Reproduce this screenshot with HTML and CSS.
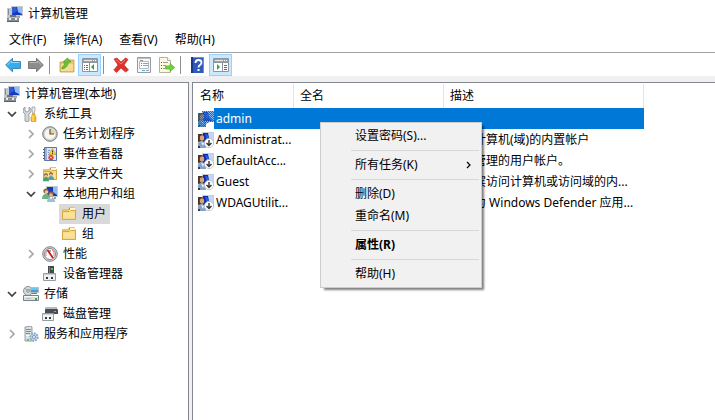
FILE: index.html
```html
<!DOCTYPE html>
<html lang="zh-CN">
<head>
<meta charset="UTF-8">
<meta name="viewport" content="width=device-width, initial-scale=1">
<title>计算机管理</title>
<link rel="stylesheet" href="styles.css">
</head>
<body>
<!-- icon set -->
<svg class="sprite" aria-hidden="true">
  <symbol id="i-computer" viewBox="0 0 16 16">
    <path d="M0 2h4v9H0z" fill="#c3c8cd"/><path d="M1 3h1v6H1z" fill="#848c93"/>
    <path d="M4 0h12v10H4z" fill="#c3cad1"/><path d="M5 1h10v8H5z" fill="#1738b8"/>
    <path d="M10 1h5v7l-4-2z" fill="#8fbcf4"/><path d="M5 1h4l1 4-5 3z" fill="#2c5de0"/>
    <path d="M8 10h5v2H8z" fill="#9aa1a8"/>
    <path d="M3 9h6v2H3z" fill="#6c7379"/><path d="M0 11h12v4H0z" fill="#858c92"/>
    <path d="M0 11h12v1H0z" fill="#b4babf"/><path d="M2 12h2v2H2zM8 12h2v2H8z" fill="#e8edf0"/>
    <path d="M0 15h12v1H0z" fill="#5b6167"/>
  </symbol>
  <symbol id="i-tools" viewBox="0 0 16 16">
    <path d="M2 1v4l2 1 2-1V1l2 2v3L6 8v7l-2 1-2-1V8L0 6V3z" fill="#d3d8db" stroke="#868d93" stroke-width=".8"/>
    <path d="M9 1h3v3l-1 4h-1L9 4z" fill="#eceff1" stroke="#8b9196" stroke-width=".7"/>
    <path d="M9 8h3v2l1 1v4l-1 1H9l-1-1v-4l1-1z" fill="#f7bd27" stroke="#cc8a14" stroke-width=".6"/>
    <path d="M10 9v6" stroke="#ffe28a"/>
  </symbol>
  <symbol id="i-clock" viewBox="0 0 16 16">
    <circle cx="8" cy="8" r="7.3" fill="#bcc4cd" stroke="#78818b"/>
    <circle cx="8" cy="8" r="5.6" fill="#fbf6e6" stroke="#d5dbe0" stroke-width=".8"/>
    <path d="M8 8V3a5 5 0 0 1 4.9 5z" fill="#f2cd83"/>
    <path d="M8 3v5h4" fill="none" stroke="#4c5661" stroke-width="1.2"/>
  </symbol>
  <symbol id="i-event" viewBox="0 0 16 16">
    <path d="M2.500 1.500h12v13h-12z" fill="#9db1d2" stroke="#5a75a6"/>
    <path d="M5 2h9v12H5z" fill="#dbe5f5"/><path d="M6 4.500h2M6 6.500h1M6 8.500h1" stroke="#7c96c8"/>
    <path d="M1 3.500h2M1 6.500h2M1 9.500h2M1 12.500h2" stroke="#4a5870"/>
    <path d="M10.500 2.500l3.500 6H7z" fill="#ffd83b" stroke="#c79b14" stroke-width=".7"/>
    <path d="M10.500 4.500v2M10.500 7v1" stroke="#333"/>
    <circle cx="9" cy="11.500" r="2.600" fill="#d9342b"/><path d="M8 10.500l2 2m0-2l-2 2" stroke="#fff" stroke-width=".8"/>
  </symbol>
  <symbol id="i-folder" viewBox="0 0 16 16">
    <path d="M1 3h6l1-2h6v2h1v11H1z" fill="#e9c463"/>
    <path d="M9 2h5v3H8z" fill="#fff7d8"/><path d="M1.500 5.500h7l1-1h5v9h-13z" fill="#f9dc8b" stroke="#d7a843"/>
    <path d="M3 7h10v4H3z" fill="#fce6a8" opacity=".6"/>
    <path d="M8 2h1v2H8z" fill="#c99732"/>
  </symbol>
  <symbol id="i-share" viewBox="0 0 16 16">
    <use href="#i-folder"/>
    <path d="M1 15q0-4 3-4t3 4z" fill="#45a46b"/><path d="M6 14q0-4 3-4t3 4z" fill="#5a9ba8"/>
    <circle cx="4" cy="9" r="1.800" fill="#6b4426"/><circle cx="4" cy="9.800" r="1.200" fill="#f1c59b"/>
    <circle cx="9" cy="8" r="1.800" fill="#6b4426"/><circle cx="9" cy="8.800" r="1.200" fill="#eab98a"/>
    <path d="M1 15h6v1H1z" fill="#c6e8d3"/>
  </symbol>
  <symbol id="i-users" viewBox="0 0 16 16">
    <path d="M4 0h12v11H4z" fill="#c3cad1"/><path d="M5 1h10v9H5z" fill="#1738b8"/>
    <path d="M11 1h4v8l-4-3z" fill="#8fbcf4"/><path d="M12 11h2v2h-2z" fill="#9aa1a8"/>
    <path d="M0 13q0-5 4-5t5 5z" fill="#6cb285"/>
    <circle cx="4" cy="5" r="2.600" fill="#8a6238"/><circle cx="4.500" cy="6" r="1.800" fill="#f1c59b"/>
    <path d="M5 16q0-5 4-5t4 5z" fill="#9dbdd4"/><path d="M8 11h2l-1 3z" fill="#fff"/>
    <circle cx="9" cy="8" r="2.600" fill="#8a6238"/><circle cx="9" cy="9" r="1.800" fill="#eab98a"/>
  </symbol>
  <symbol id="i-perf" viewBox="0 0 16 16">
    <circle cx="8" cy="8" r="7.300" fill="#d4d8db" stroke="#7b8288"/>
    <circle cx="8" cy="8" r="5.500" fill="#fff" stroke="#697077" stroke-width=".8"/>
    <path d="M4 10V6l2-2M10 4l2 2v4" fill="none" stroke="#d98080" stroke-width="1"/>
    <path d="M5.500 4l5.500 8" stroke="#d01616" stroke-width="1.800"/><path d="M8 4v2" stroke="#555"/>
  </symbol>
  <symbol id="i-device" viewBox="0 0 16 16">
    <path d="M6 0h6v8H6z" fill="#43484d"/><path d="M7 1h1v6H7z" fill="#777e84"/><path d="M9 2h2v2H9z" fill="#52c152"/>
    <path d="M1.500 7.500h12v7h-12z" fill="#eef0f1" stroke="#959ca1"/><path d="M2 8h11v1H2z" fill="#cfd3d6"/>
    <path d="M4 11h2v2H4zM9 11h2v2H9z" fill="#34393d"/>
  </symbol>
  <symbol id="i-storage" viewBox="0 0 16 16">
    <circle cx="5" cy="5" r="4.500" fill="#d6dadd" stroke="#8a9197"/><circle cx="5" cy="5" r="1.300" fill="#fff" stroke="#888"/>
    <path d="M2 2l3 3 3-3" fill="none" stroke="#87b98c"/>
    <path d="M7.500 1.500h8v5h-8z" fill="#3aa0dd" stroke="#b5bcc2"/><path d="M8 2h7v2H8z" fill="#73c5f0"/><path d="M9 7h5v1H9z" fill="#777"/>
    <path d="M.5 9.500h15v5H.5z" fill="#dce0e3" stroke="#7a8187"/><path d="M1 10h14v1H1z" fill="#f8f9fa"/>
    <path d="M12 12h2v2h-2z" fill="#38ae3d"/><path d="M3 12.500h5" stroke="#b6bdc3"/>
  </symbol>
  <symbol id="i-disk" viewBox="0 0 16 16">
    <path d="M4 1h10l2 3v4H3V4z" fill="#484e53"/><path d="M4 1h10l1 2H3z" fill="#b5bbc0"/><path d="M12 5h2v1h-2z" fill="#54d75a"/>
    <path d="M.5 7.500h11v7H.5z" fill="#f1f3f4" stroke="#959ca1"/><path d="M1 8h10v1H1z" fill="#cfd3d6"/>
    <path d="M3 11h2v2H3zM7 11h2v2H7z" fill="#34393d"/>
  </symbol>
  <symbol id="i-services" viewBox="0 0 16 16">
    <path d="M2 1l6-1 1 1v14H2z" fill="#dbe0e3" stroke="#828a91" stroke-width=".8"/>
    <path d="M3 3.500h5M3 5.500h5M3 7.500h4" stroke="#838b92"/><path d="M3 9h4v1H3z" fill="#fff"/>
    <path d="M4 13h2v2H4z" fill="#67c640"/>
    <circle cx="11" cy="11" r="3.700" fill="#c6daee" stroke="#8aa8c6" stroke-width="2" stroke-dasharray="1.800 1"/>
    <circle cx="11" cy="11" r="1.500" fill="#fff" stroke="#7594b4"/>
  </symbol>
  <symbol id="i-user" viewBox="0 0 16 16">
    <path d="M4 0h12v12H4z" fill="#c9ced4"/><path d="M5 1h10v9H5z" fill="#1029a8"/>
    <path d="M10 1h5v9l-4-4z" fill="#c3d6f8"/><path d="M7 2h2l2 4-2 2z" fill="#2c5de0"/>
    <path d="M0 2h4l2 2v4l-2 2H0z" fill="#4b3526"/><ellipse cx="4" cy="6" rx="2.200" ry="2.800" fill="#d9a377"/>
    <path d="M0 15v-4q2-3 5-2l3 3v4H2z" fill="#84a2c6"/><path d="M3 10l3 1-1 3z" fill="#eef3fa"/><path d="M0 14h2v2H0z" fill="#353b43"/>
  </symbol>
  <symbol id="i-user-off" viewBox="0 0 16 16">
    <use href="#i-user"/>
    <circle cx="11" cy="11" r="4.600" fill="#fff" stroke="#b9bdc1" stroke-width=".8"/>
    <path d="M11 8v5M8.500 11l2.500 2.500 2.500-2.500" fill="none" stroke="#333" stroke-width="1.400"/>
  </symbol>
  <pattern id="dither" width="2" height="2" patternUnits="userSpaceOnUse">
    <path d="M0 0h1v1H0zM1 1h1v1H1z" fill="#0078d7"/>
  </pattern>
  <symbol id="i-user-sel" viewBox="0 0 16 16">
    <use href="#i-user"/>
    <path d="M0 2h4V0h12v11h-4l-4 2v3H0z" fill="#0078d7" opacity=".3"/>
    <path d="M0 2h4V0h12v11h-4l-4 2v3H0z" fill="url(#dither)"/>
    <path d="M8 13l4-2h4v5H8z" fill="#fff"/>
  </symbol>
  <symbol id="i-back" viewBox="0 0 16 16">
    <path d="M.7 8L7.500 1.200V4.500h8v7h-8v3.300z" fill="#36aee8" stroke="#3a86bd"/>
    <path d="M2.500 8l4-4v1.500h8" fill="none" stroke="#8ddafa"/>
  </symbol>
  <symbol id="i-forward" viewBox="0 0 16 16">
    <path d="M15.300 8L8.500 1.200V4.500h-8v7h8v3.300z" fill="#8c8c8c" stroke="#777"/>
    <path d="M13.500 8l-4-4v1.500h-8" fill="none" stroke="#b8b8b8"/>
  </symbol>
  <symbol id="i-up" viewBox="0 0 16 16">
    <path d="M1 5h6l2-2h6v12H1z" fill="#edc367" stroke="#c99d50" stroke-width=".8"/><path d="M2 7h12v7H2z" fill="#f8dc92"/>
    <path d="M3 10q3-1 3-5H4l4.500-4L12 5H9.500q-1 6-6.500 7z" fill="#63c832" stroke="#4a9e30" stroke-width=".7"/>
  </symbol>
  <symbol id="i-tree-pane" viewBox="0 0 16 16">
    <path d="M.5 1.500h15v13H.5z" fill="#fff" stroke="#8d969f"/><path d="M1 2h14v3H1z" fill="#98a1aa"/>
    <path d="M2 3.500h8" stroke="#e7ebee"/><path d="M11 3.500h1M13 3.500h1" stroke="#fff"/>
    <path d="M0 5.500h16M7.500 6v8" stroke="#8d969f"/><path d="M2 8.500h1M4 8.500h2M2 10.500h1M4 10.500h2M2 12.500h1M4 12.500h2" stroke="#3975b8"/>
    <path d="M12 7v6l-3-3z" fill="#33a533"/>
  </symbol>
  <symbol id="i-delete" viewBox="0 0 16 16">
    <path d="M1 2l3-1 4 4 4.500-4L15 2.500 11 8l4.500 5-3 2L8 11l-4.500 4.500L.8 13 5 8z" fill="#e2302d" stroke="#c63c38" stroke-width=".8"/>
    <path d="M3 2.500l5 4.500 4-4" fill="none" stroke="#f58176"/>
  </symbol>
  <symbol id="i-props" viewBox="0 0 16 16">
    <path d="M1.500 .5h13v15h-13z" fill="#f7f7f7" stroke="#959ca2"/><path d="M2 1.500h12" stroke="#b9c0c6"/>
    <path d="M3.500 4.500h9v7h-9z" fill="#fff" stroke="#b0b8c0"/><path d="M4 3.500h3" stroke="#8a959f"/>
    <path d="M5 6.500h1M5 8.500h1" stroke="#258ccc"/><path d="M7 6.500h5M7 8.500h5" stroke="#959ea7"/>
    <path d="M6 13.500h3" stroke="#4db0dc"/><path d="M10 13.500h3" stroke="#9ba4ac"/>
  </symbol>
  <symbol id="i-export" viewBox="0 0 16 16">
    <path d="M.5 .5h8l3 3v12H.5z" fill="#fdf8df" stroke="#b9b29a"/><path d="M8.500 .5v3h3" fill="#fff" stroke="#b9b29a"/>
    <path d="M2 5.500h1M2 8.500h1M2 11.500h1" stroke="#555"/><path d="M4 5.500h5M4 8.500h3M4 11.500h2" stroke="#9a97b8"/>
    <path d="M6.500 9H11V6.500l4.700 4-4.700 4V12H6.500z" fill="#6ed239" stroke="#5ab032" stroke-width=".7"/>
  </symbol>
  <symbol id="i-help" viewBox="0 0 16 16">
    <path d="M1 0h13v16H1z" fill="#3159b9"/><path d="M1 0h2v16H1z" fill="#1c3789"/><path d="M3 0h11v1H3zM13 0h1v16h-1z" fill="#6d90da"/>
    <path d="M5.500 6q0-3 3-3t3 2.500q0 1.500-1.500 2.500T8.500 10.500" fill="none" stroke="#fff" stroke-width="1.800"/>
    <path d="M7.500 12h2v2h-2z" fill="#fff"/>
  </symbol>
  <symbol id="i-action-pane" viewBox="0 0 16 16">
    <path d="M.5 1.500h15v13H.5z" fill="#fff" stroke="#8d969f"/><path d="M1 2h14v3H1z" fill="#98a1aa"/>
    <path d="M2 3.500h8" stroke="#e7ebee"/><path d="M11 3.500h1M13 3.500h1" stroke="#fff"/>
    <path d="M0 5.500h16M9.500 6v8" stroke="#8d969f"/><path d="M11 8.500h3M11 10.500h3M11 12.500h3" stroke="#3975b8"/>
    <path d="M4 7v6l3-3z" fill="#33a533"/>
  </symbol>
  <symbol id="i-right" viewBox="0 0 16 16">
    <path d="M6 4l4 4-4 4" fill="none" stroke="currentColor" stroke-width="1.700"/>
  </symbol>
  <symbol id="i-right-small" viewBox="0 0 16 16">
    <path d="M8 5l3 3-3 3" fill="none" stroke="currentColor" stroke-width="1.200"/>
  </symbol>
  <symbol id="i-down" viewBox="0 0 16 16">
    <path d="M4 6l4 4 4-4" fill="none" stroke="currentColor" stroke-width="1.700"/>
  </symbol>
</svg>

<header class="titlebar">
  <svg class="icon"><use href="#i-computer"/></svg>
  <h1>计算机管理</h1>
</header>

<nav class="menubar">
  <button>文件(F)</button>
  <button>操作(A)</button>
  <button>查看(V)</button>
  <button>帮助(H)</button>
</nav>

<div class="toolbar" role="toolbar">
  <button aria-label="后退"><svg class="icon"><use href="#i-back"/></svg></button>
  <button aria-label="前进"><svg class="icon"><use href="#i-forward"/></svg></button>
  <span class="divider"></span>
  <button aria-label="向上"><svg class="icon"><use href="#i-up"/></svg></button>
  <button class="pressed" aria-label="显示控制台树" aria-pressed="true"><svg class="icon"><use href="#i-tree-pane"/></svg></button>
  <span class="divider"></span>
  <button aria-label="删除"><svg class="icon"><use href="#i-delete"/></svg></button>
  <button aria-label="属性"><svg class="icon"><use href="#i-props"/></svg></button>
  <button aria-label="导出列表"><svg class="icon"><use href="#i-export"/></svg></button>
  <span class="divider"></span>
  <button aria-label="帮助"><svg class="icon"><use href="#i-help"/></svg></button>
  <button class="pressed" aria-label="显示操作窗格" aria-pressed="true"><svg class="icon"><use href="#i-action-pane"/></svg></button>
</div>

<main class="panes">
  <nav class="tree">
    <div class="row">
      <button class="node"><svg class="icon"><use href="#i-computer"/></svg>计算机管理(本地)</button>
    </div>
    <ul>
      <li>
        <div class="row">
          <button class="twisty open" aria-label="折叠"><svg class="icon"><use href="#i-down"/></svg></button>
          <button class="node"><svg class="icon"><use href="#i-tools"/></svg>系统工具</button>
        </div>
        <ul>
          <li class="row">
            <button class="twisty" aria-label="展开"><svg class="icon"><use href="#i-right"/></svg></button>
            <button class="node"><svg class="icon"><use href="#i-clock"/></svg>任务计划程序</button>
          </li>
          <li class="row">
            <button class="twisty" aria-label="展开"><svg class="icon"><use href="#i-right"/></svg></button>
            <button class="node"><svg class="icon"><use href="#i-event"/></svg>事件查看器</button>
          </li>
          <li class="row">
            <button class="twisty" aria-label="展开"><svg class="icon"><use href="#i-right"/></svg></button>
            <button class="node"><svg class="icon"><use href="#i-share"/></svg>共享文件夹</button>
          </li>
          <li>
            <div class="row">
              <button class="twisty open" aria-label="折叠"><svg class="icon"><use href="#i-down"/></svg></button>
              <button class="node"><svg class="icon"><use href="#i-users"/></svg>本地用户和组</button>
            </div>
            <ul>
              <li class="row leaf"><button class="node selected"><svg class="icon"><use href="#i-folder"/></svg>用户</button></li>
              <li class="row leaf"><button class="node"><svg class="icon"><use href="#i-folder"/></svg>组</button></li>
            </ul>
          </li>
          <li class="row">
            <button class="twisty" aria-label="展开"><svg class="icon"><use href="#i-right"/></svg></button>
            <button class="node"><svg class="icon"><use href="#i-perf"/></svg>性能</button>
          </li>
          <li class="row leaf"><button class="node"><svg class="icon"><use href="#i-device"/></svg>设备管理器</button></li>
        </ul>
      </li>
      <li>
        <div class="row">
          <button class="twisty open" aria-label="折叠"><svg class="icon"><use href="#i-down"/></svg></button>
          <button class="node"><svg class="icon"><use href="#i-storage"/></svg>存储</button>
        </div>
        <ul>
          <li class="row leaf"><button class="node"><svg class="icon"><use href="#i-disk"/></svg>磁盘管理</button></li>
        </ul>
      </li>
      <li class="row">
        <button class="twisty" aria-label="展开"><svg class="icon"><use href="#i-right"/></svg></button>
        <button class="node"><svg class="icon"><use href="#i-services"/></svg>服务和应用程序</button>
      </li>
    </ul>
  </nav>

  <section class="list">
    <table>
      <colgroup><col class="col-name"><col class="col-full"><col class="col-desc"></colgroup>
      <thead>
        <tr><th>名称</th><th>全名</th><th>描述</th></tr>
      </thead>
      <tbody>
        <tr class="selected">
          <td><span class="user"><svg class="icon"><use href="#i-user-sel"/></svg><span>admin</span></span></td><td></td><td></td>
        </tr>
        <tr>
          <td><span class="user"><svg class="icon"><use href="#i-user-off"/></svg><span>Administrat...</span></span></td><td></td><td>管理计算机(域)的内置帐户</td>
        </tr>
        <tr>
          <td><span class="user"><svg class="icon"><use href="#i-user-off"/></svg><span>DefaultAcc...</span></span></td><td></td><td>系统管理的用户帐户。</td>
        </tr>
        <tr>
          <td><span class="user"><svg class="icon"><use href="#i-user-off"/></svg><span>Guest</span></span></td><td></td><td>供来宾访问计算机或访问域的内...</td>
        </tr>
        <tr>
          <td><span class="user"><svg class="icon"><use href="#i-user-off"/></svg><span>WDAGUtilit...</span></span></td><td></td><td>系统为 Windows Defender 应用...</td>
        </tr>
      </tbody>
    </table>

    <div class="context-menu" role="menu">
      <button role="menuitem">设置密码(S)...</button>
      <hr>
      <button role="menuitem">所有任务(K)<svg class="icon"><use href="#i-right-small"/></svg></button>
      <hr>
      <button role="menuitem">删除(D)</button>
      <button role="menuitem">重命名(M)</button>
      <hr>
      <button role="menuitem" class="default">属性(R)</button>
      <hr>
      <button role="menuitem">帮助(H)</button>
    </div>
  </section>
</main>
</body>
</html>
```

FILE: styles.css
```css
* {
  box-sizing: border-box;
}
body {
  margin: 0;
  height: 100vh;
  display: flex;
  flex-direction: column;
  overflow: hidden;
  background-color: #fff;
  color: #000;
  font: 12px/20px "Noto Sans", "Noto Sans CJK SC", sans-serif;
}
button {
  margin: 0;
  padding: 0;
  border: none;
  background: none;
  color: inherit;
  font: inherit;
  white-space: nowrap;
}
ul {
  margin: 0;
  padding: 0;
  list-style: none;
}
.sprite {
  position: absolute;
  width: 0;
  height: 0;
}
.icon {
  display: block;
  flex: none;
  width: 16px;
  height: 16px;
}

/* title, menu and toolbar */
.titlebar {
  display: flex;
  align-items: center;
  gap: 5px;
  height: 28px;
  padding: 0 7px;
}
.titlebar h1 {
  margin: 0;
  font-size: 12px;
  font-weight: normal;
}
.menubar {
  display: flex;
  gap: 17px;
  height: 24px;
  padding: 0 9px;
}
.menubar button:hover {
  background-color: #e5f3ff;
}
.toolbar {
  display: flex;
  align-items: center;
  height: 24px;
  padding-left: 1px;
  border-top: 1px solid #a0a0a0;
}
.toolbar button {
  display: flex;
  align-items: center;
  justify-content: center;
  width: 23px;
  height: 22px;
}
.toolbar .pressed {
  background-color: #cce8ff;
  border: 1px solid #99d1ff;
}
.divider {
  width: 8px;
  height: 18px;
  background: linear-gradient(#8d8d8d, #8d8d8d) 2px 0 / 1px 100% no-repeat;
}

/* panes */
.panes {
  flex: 1;
  display: flex;
  gap: 3px;
  min-height: 0;
  padding-top: 6px;
  background-color: #f0f0f0;
}
.tree {
  flex: none;
  width: 189px;
  padding-top: 1px;
  border-top: 1px solid #828790;
  border-right: 1px solid #828790;
  background-color: #fff;
}
.list {
  position: relative;
  flex: 1;
  min-width: 0;
  padding-top: 1px;
  border-top: 1px solid #828790;
  border-left: 1px solid #828790;
  background-color: #fff;
}

/* console tree */
.tree > .row {
  padding-left: 2px;
}
.tree > ul {
  padding-left: 4px;
}
.tree li ul {
  padding-left: 19px;
}
.row {
  display: flex;
  gap: 1px;
  height: 20px;
}
.leaf {
  padding-left: 17px;
}
.twisty {
  display: flex;
  align-items: center;
  color: #a6a6a6;
}
.twisty.open {
  color: #404040;
}
.node {
  display: flex;
  align-items: center;
  gap: 5px;
  padding: 0 4px 0 2px;
}
.node.selected {
  background-color: #d9d9d9;
}

/* user list */
table {
  width: 451px;
  table-layout: fixed;
  border-collapse: separate;
  border-spacing: 0;
}
.col-name {
  width: 101px;
}
.col-full {
  width: 150px;
}
.col-desc {
  width: 200px;
}
th {
  height: 24px;
  padding: 0 6px;
  border-right: 1px solid #e5e5e5;
  font-weight: normal;
  text-align: left;
}
th:first-child {
  padding-left: 7px;
}
td {
  height: 21px;
  padding: 0 6px;
  white-space: nowrap;
}
td:first-child {
  padding: 0 0 0 5px;
}
.user {
  display: flex;
  align-items: center;
}
.user span {
  padding-left: 2px;
}
tr.selected {
  color: #fff;
}
tr.selected td {
  background-color: #0078d7;
}
tr.selected td:first-child {
  background: linear-gradient(#0078d7, #0078d7) 21px 0 no-repeat;
}

/* context menu */
.context-menu {
  position: absolute;
  left: 127px;
  top: 39px;
  width: 162px;
  padding: 2px;
  border: 1px solid #ccc;
  background-color: #f1f1f1;
  box-shadow: 3px 3px 2px -1px rgba(0, 0, 0, 0.5);
}
.context-menu button {
  display: flex;
  align-items: center;
  justify-content: space-between;
  width: 100%;
  height: 22px;
  padding: 0 4px 0 32px;
}
.context-menu button:hover {
  background-color: #91c9f7;
}
.context-menu hr {
  height: 1px;
  margin: 3px 0 3px 28px;
  border: none;
  background-color: #d7d7d7;
}
.context-menu .default {
  font-weight: bold;
}
```
